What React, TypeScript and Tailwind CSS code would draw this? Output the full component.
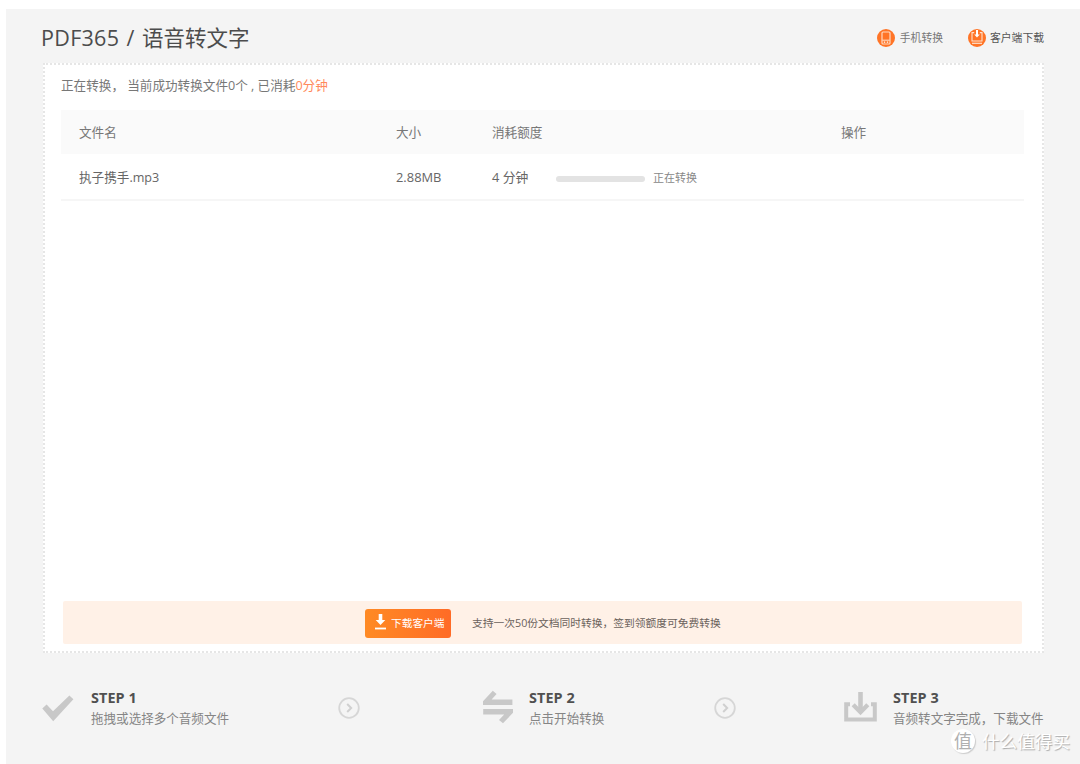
import React from "react";

const PhoneIcon = () => (
  <svg width="18" height="18" viewBox="0 0 18 18" className="block shrink-0">
    <circle cx="9" cy="9" r="9" fill="#ff7426" />
    <rect x="5" y="3" width="8" height="12" rx="1" fill="none" stroke="#ffd9c0" strokeWidth="1.2" />
    <path d="M5.2 11.2h7.6" stroke="#ffd9c0" strokeWidth="1.1" />
    <path d="M6.8 13.2h1.4M9.8 13.2h1.4" stroke="#fff" strokeWidth="1.2" />
  </svg>
);

const ClientIcon = () => (
  <svg width="18" height="18" viewBox="0 0 18 18" className="block shrink-0">
    <circle cx="9" cy="9" r="9" fill="#ff7426" />
    <path d="M6.2 3.6H4V12h10V3.6h-2.2" fill="none" stroke="#ffe0cb" strokeWidth="1.1" />
    <path d="M4 14.3h10" stroke="#ffe0cb" strokeWidth="1.2" />
    <path d="M9 1v5.5" stroke="#fff" strokeWidth="2" />
    <path d="M6.2 5.4h5.6L9 8.4z" fill="#fff" />
  </svg>
);

const CheckIcon = () => (
  <svg width="32" height="27" viewBox="0 0 32 27" className="block">
    <path d="M.3 13.5 4.6 9.6 11 16.2 27.4.5 31.4 4.3 11.2 26.2z" fill="#c8c8c8" />
  </svg>
);

const SwapIcon = () => (
  <svg width="30" height="34" viewBox="0 0 30 34" className="block">
    <path d="M0 15V11.3L9.8.7 13.6 4 8.6 9.6H29.4V15z" fill="#c8c8c8" />
    <path d="M30 19v3.7L20 33.3 16 30l5.2-5.6H.2V19z" fill="#c8c8c8" />
  </svg>
);

const TrayIcon = () => (
  <svg width="33" height="30" viewBox="0 0 33 30" className="block">
    <path d="M6 12.2H2.2V27.4H30.8V12.2H27" fill="none" stroke="#c8c8c8" strokeWidth="4" />
    <path d="M16.5 0V20" stroke="#c8c8c8" strokeWidth="4.6" />
    <path d="M9.2 12.8 16.5 20.2 23.8 12.8" fill="none" stroke="#c8c8c8" strokeWidth="4.4" />
  </svg>
);

const NextIcon = () => (
  <svg width="22" height="22" viewBox="0 0 22 22" className="block">
    <circle cx="11" cy="11" r="9.8" fill="none" stroke="#d6d6d6" strokeWidth="1.8" />
    <path d="M9.2 7 13.2 11 9.2 15" fill="none" stroke="#d0d0d0" strokeWidth="2" />
  </svg>
);

const DownloadIcon = () => (
  <svg width="11" height="16" viewBox="0 0 11 16" className="-mt-[2px] block shrink-0">
    <path d="M3.7 0h3.6v6h3L5.5 11 .7 6h3z" fill="#fff" />
    <path d="M0 14.5h11" stroke="#fff" strokeWidth="1.8" />
  </svg>
);

const Step = ({ title, text }: { title: string; text: string }) => (
  <div className="whitespace-nowrap">
    <div className="h-5 text-[14.4px] font-bold leading-5 tracking-[0.1px] text-[#505050]">{title}</div>
    <div className="h-5 pt-px text-[12.55px] leading-5 text-[#858585]">{text}</div>
  </div>
);

export default function App() {
  return (
    <div className="h-[764px] w-[1080px] overflow-hidden bg-white pl-[6px] pt-[9px] font-['Open_Sans','Noto_Sans_CJK_SC',sans-serif]">
      <div className="relative h-[755px] bg-[#f4f4f4] pl-[37px]">
        <header className="flex h-[54px] w-[1001px] items-center justify-between pt-[4px]">
          <h1 className="-ml-[2px] whitespace-pre text-[21.5px] leading-[30px] text-[#4c4c4c]">
            <span className="tracking-[0.3px] [word-spacing:1.4px]">PDF365 / </span>语音转文字
          </h1>
          <div className="flex items-center gap-6 whitespace-nowrap text-[10.8px] leading-[18px] text-[#555]">
            <div className="-ml-px flex items-center gap-[5px] pr-px text-[#777]">
              <PhoneIcon />
              <span>手机转换</span>
            </div>
            <div className="flex items-center gap-[4px]">
              <ClientIcon />
              <span>客户端下载</span>
            </div>
          </div>
        </header>

        <main className="flex h-[590px] w-[1001px] flex-col border-2 border-dotted border-[#e6e6e6] bg-white pl-[16px] pr-[18px]">
          <p className="h-[45px] whitespace-pre pt-[11px] text-[12.6px] leading-5 text-[#777]">
            正在转换， 当前成功转换文件0个 , 已消耗<span className="text-[#ff8a5c]">0分钟</span>
          </p>
          <div className="grid h-[44px] grid-cols-[317px_96px_349px_1fr] items-center bg-[#fafafa] pl-[18px] pt-[2px] text-[12.6px] text-[#777]">
            <span>文件名</span>
            <span>大小</span>
            <span>消耗额度</span>
            <span>操作</span>
          </div>
          <div className="grid h-[47px] grid-cols-[317px_96px_64px_98px_1fr] items-center border-b-2 border-[#f6f6f6] pl-[18px] pt-[3px] text-[12.6px] text-[#666]">
            <span>执子携手.mp3</span>
            <span className="text-[12.9px]">2.88MB</span>
            <span className="text-[12.8px]">4 分钟</span>
            <div className="mt-[2px] h-[6px] w-[89px] rounded-full bg-[#e3e3e3]" />
            <span className="-ml-px pt-px text-[11px] text-[#888]">正在转换</span>
          </div>
          <div className="ml-[2px] mr-[2px] mb-[7px] mt-auto flex h-[43px] items-center rounded-[2px] bg-[#fff1e7] pl-[302px]">
            <button className="mt-[1px] flex h-[29px] w-[86px] items-center gap-[5px] whitespace-nowrap rounded-[3px] bg-linear-to-r from-[#ff8a24] to-[#ff6b26] pl-[10px] text-[10.7px] text-white">
              <DownloadIcon />
              <span>下载客户端</span>
            </button>
            <span className="ml-[21px] mt-[2px] whitespace-nowrap text-[10.75px] text-[#6b625c]">支持一次50份文档同时转换，签到领额度可免费转换</span>
          </div>
        </main>

        <footer className="grid h-[110px] w-[1001px] grid-cols-[48px_247px_145px_46px_185px_130px_49px_152px] pt-[35px]">
          <div className="-ml-px pt-[7px]"><CheckIcon /></div>
          <Step title="STEP 1" text="拖拽或选择多个音频文件" />
          <div className="pt-[9px]"><NextIcon /></div>
          <div className="pt-[2px]"><SwapIcon /></div>
          <Step title="STEP 2" text="点击开始转换" />
          <div className="pt-[9px]"><NextIcon /></div>
          <div className="pt-[4px]"><TrayIcon /></div>
          <Step title="STEP 3" text="音频转文字完成，下载文件" />
        </footer>

        <div className="absolute left-[945px] top-[719px] flex items-center gap-[7px] whitespace-nowrap">
          <span className="flex size-[24px] items-center justify-center rounded-full bg-white text-[18px] leading-none text-[#b0b0b0] shadow-[1px_1px_1px_#ccc]">值</span>
          <span className="text-[17.6px] leading-[26px] text-white [text-shadow:1px_1px_1px_#aaa]">什么值得买</span>
        </div>
      </div>
    </div>
  );
}
